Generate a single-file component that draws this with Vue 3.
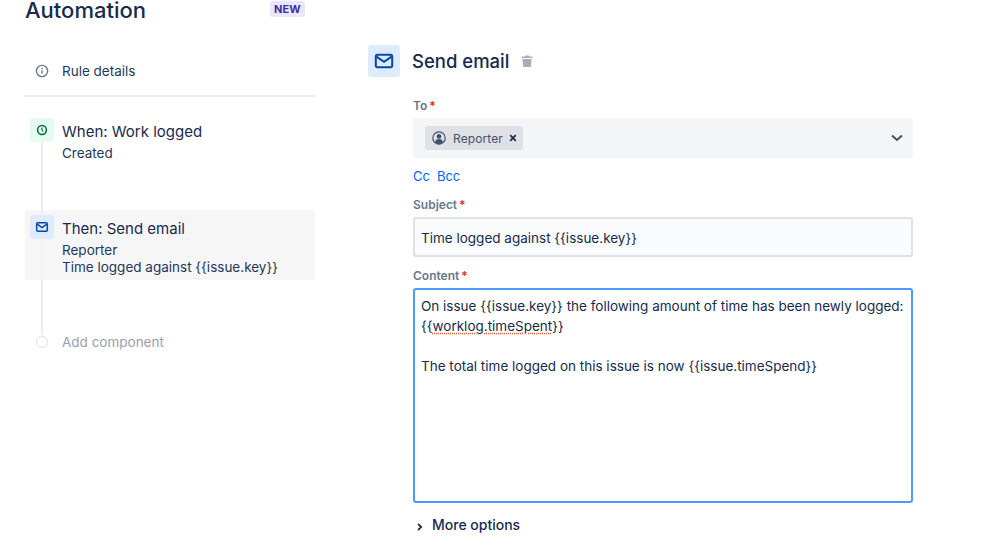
<template>
  <div class="page">
    <aside class="sidebar">
      <header class="sidebar-head">
        <h1>Automation</h1>
        <span class="badge">NEW</span>
      </header>

      <div class="details">
        <span class="details-icon">
          <svg width="16" height="16" viewBox="0 0 16 16" fill="none">
            <circle cx="8" cy="8" r="5.6" stroke="#6b778c" stroke-width="1.4" />
            <rect x="7.3" y="7.2" width="1.4" height="3.6" rx=".5" fill="#6b778c" />
            <circle cx="8" cy="5.5" r=".85" fill="#6b778c" />
          </svg>
        </span>
        <span>Rule details</span>
      </div>

      <div class="steps">
        <div class="rail"></div>

        <div class="step">
          <span class="step-icon green">
            <svg width="12" height="12" viewBox="0 0 12 12" fill="none">
              <circle cx="6" cy="6" r="4.4" stroke="#006644" stroke-width="1.5" />
              <path d="M6 3.6V6l1.2 1.5" stroke="#006644" stroke-width="1.1" />
            </svg>
          </span>
          <div>
            <div class="step-title">When: Work logged</div>
            <div class="step-sub">Created</div>
          </div>
        </div>

        <div class="step active">
          <span class="step-icon blue">
            <svg width="14" height="14" viewBox="0 0 14 14" fill="none">
              <rect x="1.7" y="2.8" width="10.6" height="8.4" rx="1.2" stroke="#0747a6" stroke-width="1.5" />
              <path d="M2.2 4.2 7 7.6l4.8-3.4" stroke="#0747a6" stroke-width="1.5" />
            </svg>
          </span>
          <div>
            <div class="step-title">Then: Send email</div>
            <div class="step-sub">Reporter</div>
            <div class="step-sub">Time logged against {{ subjectText }}</div>
          </div>
        </div>

        <div class="add">
          <span class="add-dot"></span>
          <span>Add component</span>
        </div>
      </div>
    </aside>

    <main class="editor">
      <div class="editor-head">
        <span class="head-icon">
          <svg width="20" height="20" viewBox="0 0 20 20" fill="none">
            <rect x="1.8" y="3.8" width="16.4" height="12.4" rx="1.6" stroke="#0747a6" stroke-width="2" />
            <path d="M2.4 5.6 10 10.8l7.6-5.2" stroke="#0747a6" stroke-width="2" />
          </svg>
        </span>
        <h2>Send email</h2>
        <svg class="trash" width="12" height="12" viewBox="0 0 12 12">
          <path d="M4.4.6h3.2l.5 1H11a.5.5 0 0 1 .5.5v.9H.5v-.9a.5.5 0 0 1 .5-.5h2.9zM1.4 4h9.2l-.7 7.2a.9.9 0 0 1-.9.8H3a.9.9 0 0 1-.9-.8z" fill="#a5adba" />
        </svg>
      </div>

      <form class="fields" @submit.prevent>
        <label class="label">To<span class="req">*</span></label>
        <div class="select">
          <span class="chip">
            <svg width="14" height="14" viewBox="0 0 14 14" fill="none">
              <circle cx="7" cy="7" r="6.2" stroke="#42526e" stroke-width="1.2" />
              <circle cx="7" cy="5.4" r="2.3" fill="#42526e" />
              <path d="M3.2 11.6c0-2.6 1.6-3.5 3.8-3.5s3.8.9 3.8 3.5a6 6 0 0 1-7.6 0z" fill="#42526e" />
            </svg>
            <span class="chip-text">Reporter</span>
            <svg class="chip-x" width="8" height="8" viewBox="0 0 8 8">
              <path d="M1.2 1.2l5.6 5.6M6.8 1.2 1.2 6.8" stroke="#172b4d" stroke-width="1.7" />
            </svg>
          </span>
          <svg class="caret" width="14" height="10" viewBox="0 0 14 10" fill="none">
            <path d="M2 2.4 7 7l5-4.6" stroke="#42526e" stroke-width="2" />
          </svg>
        </div>

        <div class="links">
          <a>Cc</a>
          <a>Bcc</a>
        </div>

        <label class="label">Subject<span class="req">*</span></label>
        <div class="input">Time logged against {{ subjectText }}</div>

        <label class="label">Content<span class="req">*</span></label>
        <div class="textarea">
          <p v-for="(line, i) in contentLines" :key="i" v-html="line"></p>
        </div>

        <div class="more">
          <svg width="8" height="10" viewBox="0 0 8 10" fill="none">
            <path d="M2 1.8 5.2 5 2 8.2" stroke="#172b4d" stroke-width="1.8" />
          </svg>
          <span>More options</span>
        </div>
      </form>
    </main>
  </div>
</template>

<script setup>
const subjectText = '{{issue.key}}'

const contentLines = [
  'On issue {{issue.key}} the following amount of time has been newly logged:',
  '{{<span class="typo">worklog.timeSpent</span>}}',
  '&nbsp;',
  'The total time logged on this issue is now {{issue.timeSpend}}',
]
</script>

<style>
body {
  background: #fff;
  overflow: hidden;
}
.typo {
  text-decoration: underline dotted #ff5630;
  text-underline-offset: 2px;
}
</style>

<style scoped>
.page {
  display: flex;
  height: 559px;
  overflow: hidden;
  font-family: Inter, "Liberation Sans", sans-serif;
  font-size: 13.5px;
  color: #172b4d;
}

.sidebar {
  width: 290px;
  margin-left: 25px;
}

.sidebar-head {
  display: flex;
  justify-content: space-between;
  align-items: flex-start;
  height: 47px;
  padding-right: 10px;
  box-sizing: border-box;
}

h1 {
  margin: 0;
  font-size: 22px;
  line-height: 20px;
  font-weight: 500;
}

.badge {
  margin-top: 1px;
  padding: 0 4px;
  height: 16px;
  line-height: 16px;
  border-radius: 3px;
  background: #eae6ff;
  color: #403294;
  font-size: 11px;
  font-weight: 700;
  letter-spacing: .2px;
}

.details {
  display: flex;
  align-items: center;
  height: 48px;
  margin-bottom: 16px;
  border-bottom: 2px solid #ebecf0;
  color: #253858;
  box-sizing: content-box;
}

.details-icon {
  display: flex;
  justify-content: center;
  width: 34px;
  margin-right: 3px;
}

.steps {
  position: relative;
}

.rail {
  position: absolute;
  left: 16px;
  top: 10px;
  width: 2px;
  height: 212px;
  background: #ebecf0;
}

.step {
  position: relative;
  display: flex;
  gap: 8px;
  padding: 5px;
  border-radius: 3px;
  line-height: 17px;
}

.step.active {
  height: 70px;
  box-sizing: border-box;
  margin-top: 43px;
  background: #f4f4f5cc;
}

.step-icon {
  flex: none;
  display: flex;
  align-items: center;
  justify-content: center;
  width: 24px;
  height: 24px;
  border-radius: 3px;
}

.green { background: #e3fcef; }
.blue { background: #deebff; }

.step-title {
  margin-top: 4px;
  margin-bottom: 3px;
  font-size: 15px;
  line-height: 20px;
}

.step-sub {
  color: #253858;
}

.add {
  position: relative;
  display: flex;
  align-items: center;
  gap: 14px;
  margin-top: 52px;
  margin-left: 11px;
  height: 20px;
  color: #97a0af;
}

.add-dot {
  width: 12px;
  height: 12px;
  box-sizing: border-box;
  border: 1px solid #dfe1e6;
  border-radius: 50%;
  background: #fff;
}

.editor {
  width: 545px;
  margin-left: 53px;
  padding-top: 45px;
}

.editor-head {
  display: flex;
  align-items: center;
  height: 32px;
}

.head-icon {
  display: flex;
  align-items: center;
  justify-content: center;
  width: 32px;
  height: 32px;
  border-radius: 3px;
  background: #deebff;
}

h2 {
  margin: 0 12px;
  font-size: 18.5px;
  line-height: 28px;
  font-weight: 500;
}

.fields {
  width: 500px;
  margin-left: 45px;
  padding-top: 21px;
}

.label {
  display: block;
  height: 15px;
  margin-bottom: 5px;
  font-size: 12px;
  line-height: 15px;
  font-weight: 600;
  color: #6b778c;
}

.req {
  margin-left: 2px;
  color: #de350b;
}

.select {
  display: flex;
  align-items: center;
  justify-content: space-between;
  height: 40px;
  box-sizing: border-box;
  padding: 0 9px 0 12px;
  border-radius: 3px;
  background: #f4f5f7;
}

.chip {
  display: flex;
  align-items: center;
  height: 24px;
  padding: 0 6px 0 7px;
  border-radius: 3px;
  background: #dfe1e6;
}

.chip-text {
  margin: 0 6px 0 7px;
  font-size: 12px;
  color: #42526e;
  letter-spacing: .1px;
}

.links {
  display: flex;
  gap: 7px;
  height: 39px;
  padding-top: 10px;
  box-sizing: border-box;
  line-height: 17px;
  font-size: 13px;
  color: #0065ff;
}

.input {
  height: 40px;
  box-sizing: border-box;
  padding: 0 6px;
  margin-bottom: 11px;
  border: 2px solid #dfe1e6;
  border-radius: 3px;
  background: #fafbfc;
  line-height: 38px;
}

.textarea {
  height: 215px;
  box-sizing: border-box;
  padding: 6px 6px;
  border: 2px solid #4c9aff;
  border-radius: 3px;
  background: #fff;
  line-height: 20px;
}

.textarea p {
  margin: 0;
  white-space: nowrap;
}

.more {
  display: flex;
  align-items: center;
  gap: 8px;
  margin-top: 13px;
  font-size: 14px;
  line-height: 17px;
  font-weight: 500;
}

.more svg {
  margin-top: 5px;
  margin-left: 3px;
}
</style>
